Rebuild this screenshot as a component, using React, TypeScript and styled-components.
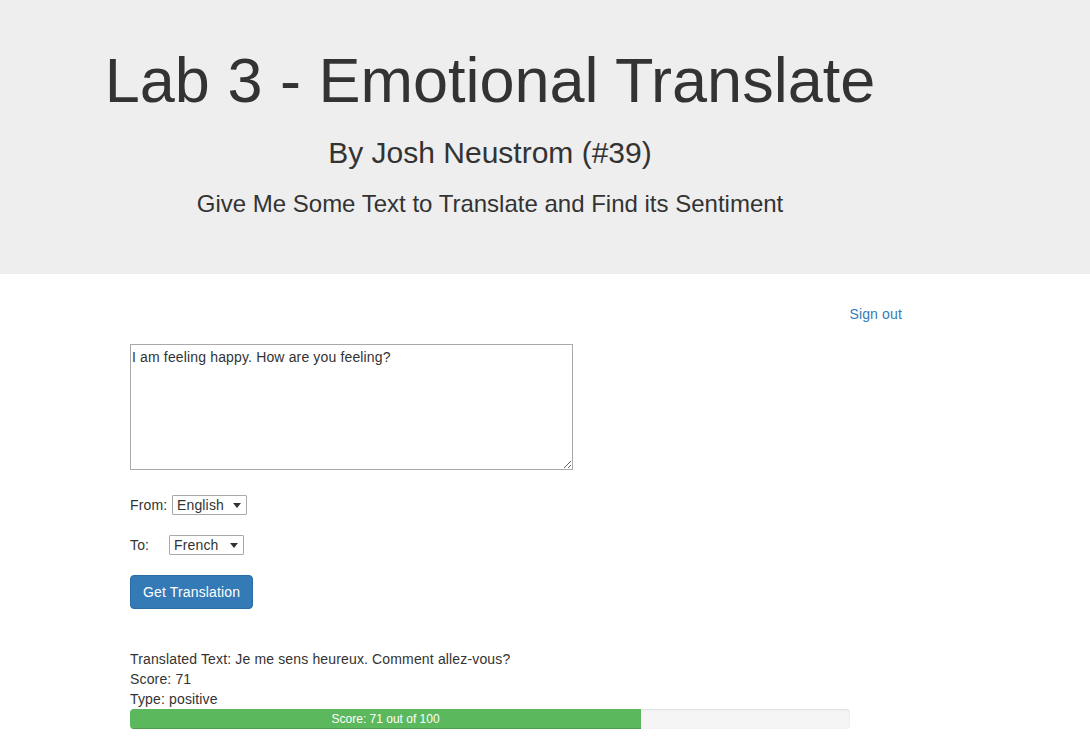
import React from "react";
import styled, { createGlobalStyle } from "styled-components";

const Global = createGlobalStyle`
  html, body { margin: 0; padding: 0; background: #fff; }
  body {
    font-family: "Liberation Sans", Arial, Helvetica, sans-serif;
    font-size: 14px;
    line-height: 20px;
    color: #333;
  }
  * { box-sizing: border-box; }
`;

const Jumbotron = styled.header`
  background: #eee;
  padding: 46px 0 55px;
`;

const HeaderInner = styled.div`
  width: 860px;
  margin-left: 60px;
  display: flex;
  flex-direction: column;
  align-items: center;
  text-align: center;
`;

const Title = styled.h1`
  margin: 0;
  font-size: 63px;
  line-height: 69px;
  font-weight: 400;
`;

const Byline = styled.h2`
  margin: 21px 0 0;
  font-size: 30px;
  line-height: 33px;
  font-weight: 400;
`;

const Lead = styled.p`
  margin: 20px 0 0;
  font-size: 24px;
  line-height: 30px;
  font-weight: 400;
`;

const Main = styled.main`
  width: 860px;
  margin-left: 60px;
  padding: 30px 18px 0 70px;
  display: flex;
  flex-direction: column;
  align-items: flex-start;
  letter-spacing: 0.15px;
`;

const SignOutRow = styled.div`
  align-self: stretch;
  display: flex;
  justify-content: flex-end;
`;

const Link = styled.a`
  color: #337ab7;
  text-decoration: none;
  font-size: 14px;
  line-height: 20px;
`;

const TextArea = styled.textarea`
  margin-top: 20px;
  width: 443px;
  height: 126px;
  border: 1px solid #a9a9a9;
  padding: 2px 1px;
  font-family: "Liberation Sans", Arial, sans-serif;
  font-size: 14px;
  line-height: 20px;
  letter-spacing: 0.15px;
  color: #333;
  resize: both;
`;

const FieldRow = styled.div<{ $top: number }>`
  margin-top: ${(p) => p.$top}px;
  display: flex;
  align-items: center;
  height: 20px;
`;

const Label = styled.label<{ $width: number }>`
  width: ${(p) => p.$width}px;
  font-size: 14px;
  line-height: 20px;
`;

const SelectWrap = styled.span<{ $width: number }>`
  position: relative;
  display: inline-block;
  width: ${(p) => p.$width}px;
  height: 20px;
`;

const Select = styled.select`
  appearance: none;
  -webkit-appearance: none;
  width: 100%;
  height: 20px;
  border: 1px solid #a9a9a9;
  border-radius: 1px;
  background: #fff;
  padding: 0 0 0 4px;
  font-family: "Liberation Sans", Arial, sans-serif;
  font-size: 14px;
  line-height: 18px;
  letter-spacing: 0.15px;
  color: #333;
  outline: none;
`;

const Arrow = styled.span`
  position: absolute;
  right: 6px;
  top: 8px;
  width: 0;
  height: 0;
  border-left: 4px solid transparent;
  border-right: 4px solid transparent;
  border-top: 5px solid #333;
  pointer-events: none;
`;

const Button = styled.button`
  margin-top: 20px;
  height: 34px;
  padding: 6px 12px;
  background: #337ab7;
  border: 1px solid #2e6da4;
  border-radius: 4px;
  color: #fff;
  font-family: "Liberation Sans", Arial, sans-serif;
  font-size: 14px;
  line-height: 20px;
  letter-spacing: 0.15px;
  cursor: pointer;
`;

const Results = styled.section`
  margin-top: 40px;
  width: 720px;
  display: flex;
  flex-direction: column;
`;

const ResultLine = styled.div`
  font-size: 14px;
  line-height: 20px;
`;

const Progress = styled.div`
  height: 20px;
  background: #f5f5f5;
  border-radius: 4px;
  box-shadow: inset 0 1px 2px rgba(0, 0, 0, 0.1);
  overflow: hidden;
  display: flex;
  letter-spacing: 0;
`;

const ProgressBar = styled.div`
  height: 100%;
  background: #5cb85c;
  color: #fff;
  font-size: 12px;
  line-height: 20px;
  text-align: center;
  box-shadow: inset 0 -1px 0 rgba(0, 0, 0, 0.15);
`;

export default function App() {
  const score = 71;
  return (
    <>
      <Global />
      <Jumbotron>
        <HeaderInner>
          <Title>Lab 3 - Emotional Translate</Title>
          <Byline>By Josh Neustrom (#39)</Byline>
          <Lead>Give Me Some Text to Translate and Find its Sentiment</Lead>
        </HeaderInner>
      </Jumbotron>
      <Main>
        <SignOutRow>
          <Link href="#">Sign out</Link>
        </SignOutRow>
        <TextArea defaultValue="I am feeling happy. How are you feeling?" />
        <FieldRow $top={25}>
          <Label $width={42}>From:</Label>
          <SelectWrap $width={75}>
            <Select defaultValue="en">
              <option value="en">English</option>
              <option value="fr">French</option>
            </Select>
            <Arrow />
          </SelectWrap>
        </FieldRow>
        <FieldRow $top={20}>
          <Label $width={39}>To:</Label>
          <SelectWrap $width={75}>
            <Select defaultValue="fr">
              <option value="en">English</option>
              <option value="fr">French</option>
            </Select>
            <Arrow />
          </SelectWrap>
        </FieldRow>
        <Button type="button">Get Translation</Button>
        <Results>
          <ResultLine>Translated Text: Je me sens heureux. Comment allez-vous?</ResultLine>
          <ResultLine>Score: {score}</ResultLine>
          <ResultLine>Type: positive</ResultLine>
          <Progress>
            <ProgressBar style={{ width: `${score}%` }}>Score: {score} out of 100</ProgressBar>
          </Progress>
        </Results>
      </Main>
    </>
  );
}
